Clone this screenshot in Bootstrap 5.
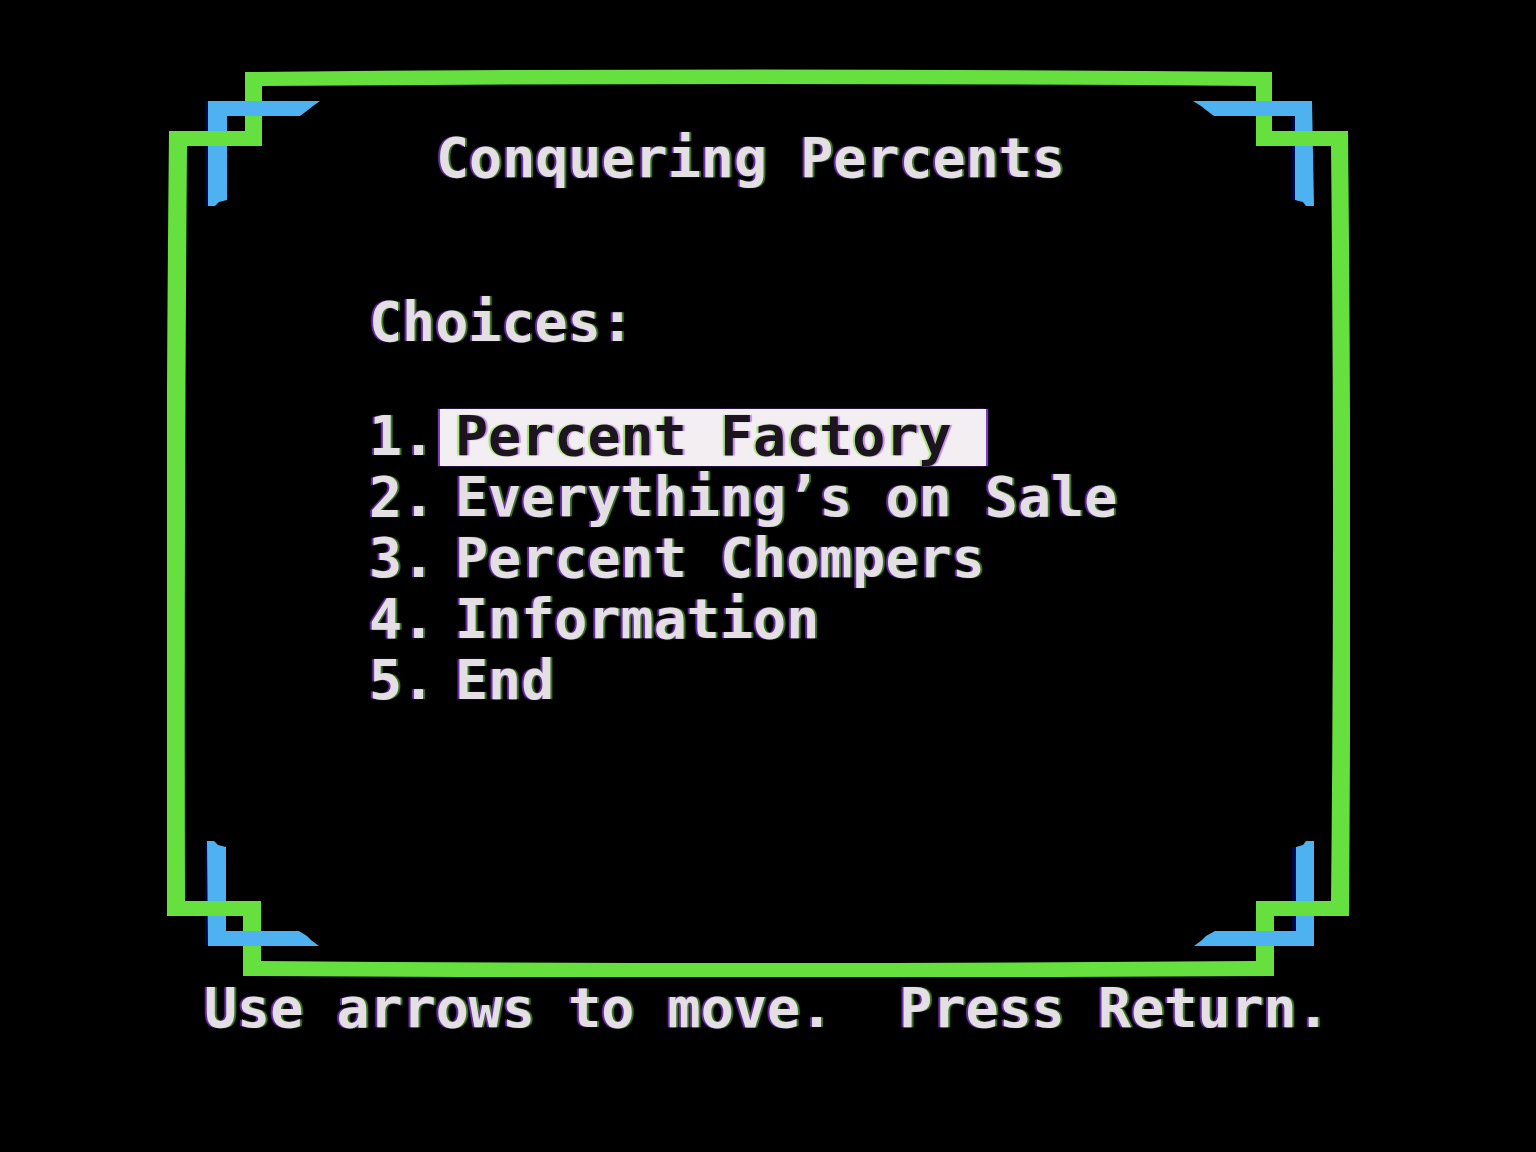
<!DOCTYPE html>
<html lang="en">
<head>
<meta charset="utf-8">
<meta name="viewport" content="width=device-width, initial-scale=1">
<title>Conquering Percents</title>
<link href="https://cdn.jsdelivr.net/npm/bootstrap@5.3.0/dist/css/bootstrap.min.css" rel="stylesheet">
<style>
  body {
    background: #000;
    color: #e3dfe3;
    font: bold 55px/54px "DejaVu Sans Mono", monospace;
    text-shadow: -2px 0 1px #6a2fb0, 2px 0 1px #3f7a1c;
  }
  .screen { padding: 69px 186px 60px 167px; }
  .panel { min-height: 908px; padding-top: 62px; }
  .frame { z-index: -1; }
  .title { font: inherit; margin-bottom: 110px; }
  .menu { padding-left: 202px; }
  .menu h2 { font: inherit; margin-bottom: 60px; }
  .menu-row { margin-bottom: 4px; }
  .menu-number { width: 71px; flex: none; }
  .choice { color: inherit; text-decoration: none; padding: 0 34px 3px 15px; }
  .choice.active {
    background: #f2eef2;
    color: #1c141f;
    box-shadow: -2px 0 1px #7a3fc0, 2px 0 1px #7a3fc0;
    text-shadow: -2px 0 1px #a8e070, 2px 0 1px #c08ae8;
  }
  .hint { white-space: pre-wrap; padding: 4px 0 0 37px; margin-right: -20px; }
</style>
</head>
<body>
<div class="screen">
  <main class="panel position-relative">
    <svg class="frame position-absolute top-0 start-0 w-100 h-100" viewBox="167 69 1183 908" preserveAspectRatio="none" aria-hidden="true">
      <!-- green border with notched corners -->
      <path fill="#65e03f" fill-rule="evenodd" d="M245 72Q758 67 1272 72V131H1348Q1352 520 1349 916H1274V976Q758 979 243 976V916H167Q165 520 169 131H245Z M262 86Q758 82 1256 86V146H1331Q1335 520 1331 901H1256V961Q758 965 261 961V901H185Q184 520 187 146H262Z"/>
      <!-- dark edge left of the blue brackets -->
      <path fill="#00064a" d="M205 101H209V206H205Z M1292 117H1296V200H1292Z M205 841H209V945H205Z M1292 847H1296V931H1292Z"/>
      <!-- blue corner brackets -->
      <g fill="#4db2ef">
        <path d="M208 101H320L313 106L308 110L300 116H227V200L219 202L215 206H208Z"/>
        <path d="M1193 101H1312L1314 206H1306L1303 202L1295 200V116H1214L1206 110L1201 106Z"/>
        <path d="M207 841H214L218 845L226 847V931H299L307 936L311 940L319 946H208Z"/>
        <path d="M1314 841H1306L1303 845L1296 847V931H1215L1206 936L1202 940L1194 946H1314Z"/>
      </g>
      <!-- border passing over the brackets -->
      <path fill="#65e03f" d="M200 131H232V146H200Z M1288 131H1320V146H1288Z M200 901H232V916H200Z M1288 901H1320V916H1288Z"/>
    </svg>
    <h1 class="title text-center pe-3">Conquering Percents</h1>
    <nav class="menu" aria-labelledby="choices">
      <h2 id="choices">Choices:</h2>
      <ol class="list-unstyled mb-0">
        <li class="menu-row d-flex"><span class="menu-number">1.</span><a class="choice active" href="#factory" aria-current="true">Percent Factory</a></li>
        <li class="menu-row d-flex"><span class="menu-number">2.</span><a class="choice" href="#sale">Everything’s on Sale</a></li>
        <li class="menu-row d-flex"><span class="menu-number">3.</span><a class="choice" href="#chompers">Percent Chompers</a></li>
        <li class="menu-row d-flex"><span class="menu-number">4.</span><a class="choice" href="#information">Information</a></li>
        <li class="menu-row d-flex"><span class="menu-number">5.</span><a class="choice" href="#end">End</a></li>
      </ol>
    </nav>
  </main>
  <p class="hint mb-0">Use arrows to move.  Press Return.</p>
</div>
<script src="https://cdn.jsdelivr.net/npm/bootstrap@5.3.0/dist/js/bootstrap.bundle.min.js"></script>
</body>
</html>
